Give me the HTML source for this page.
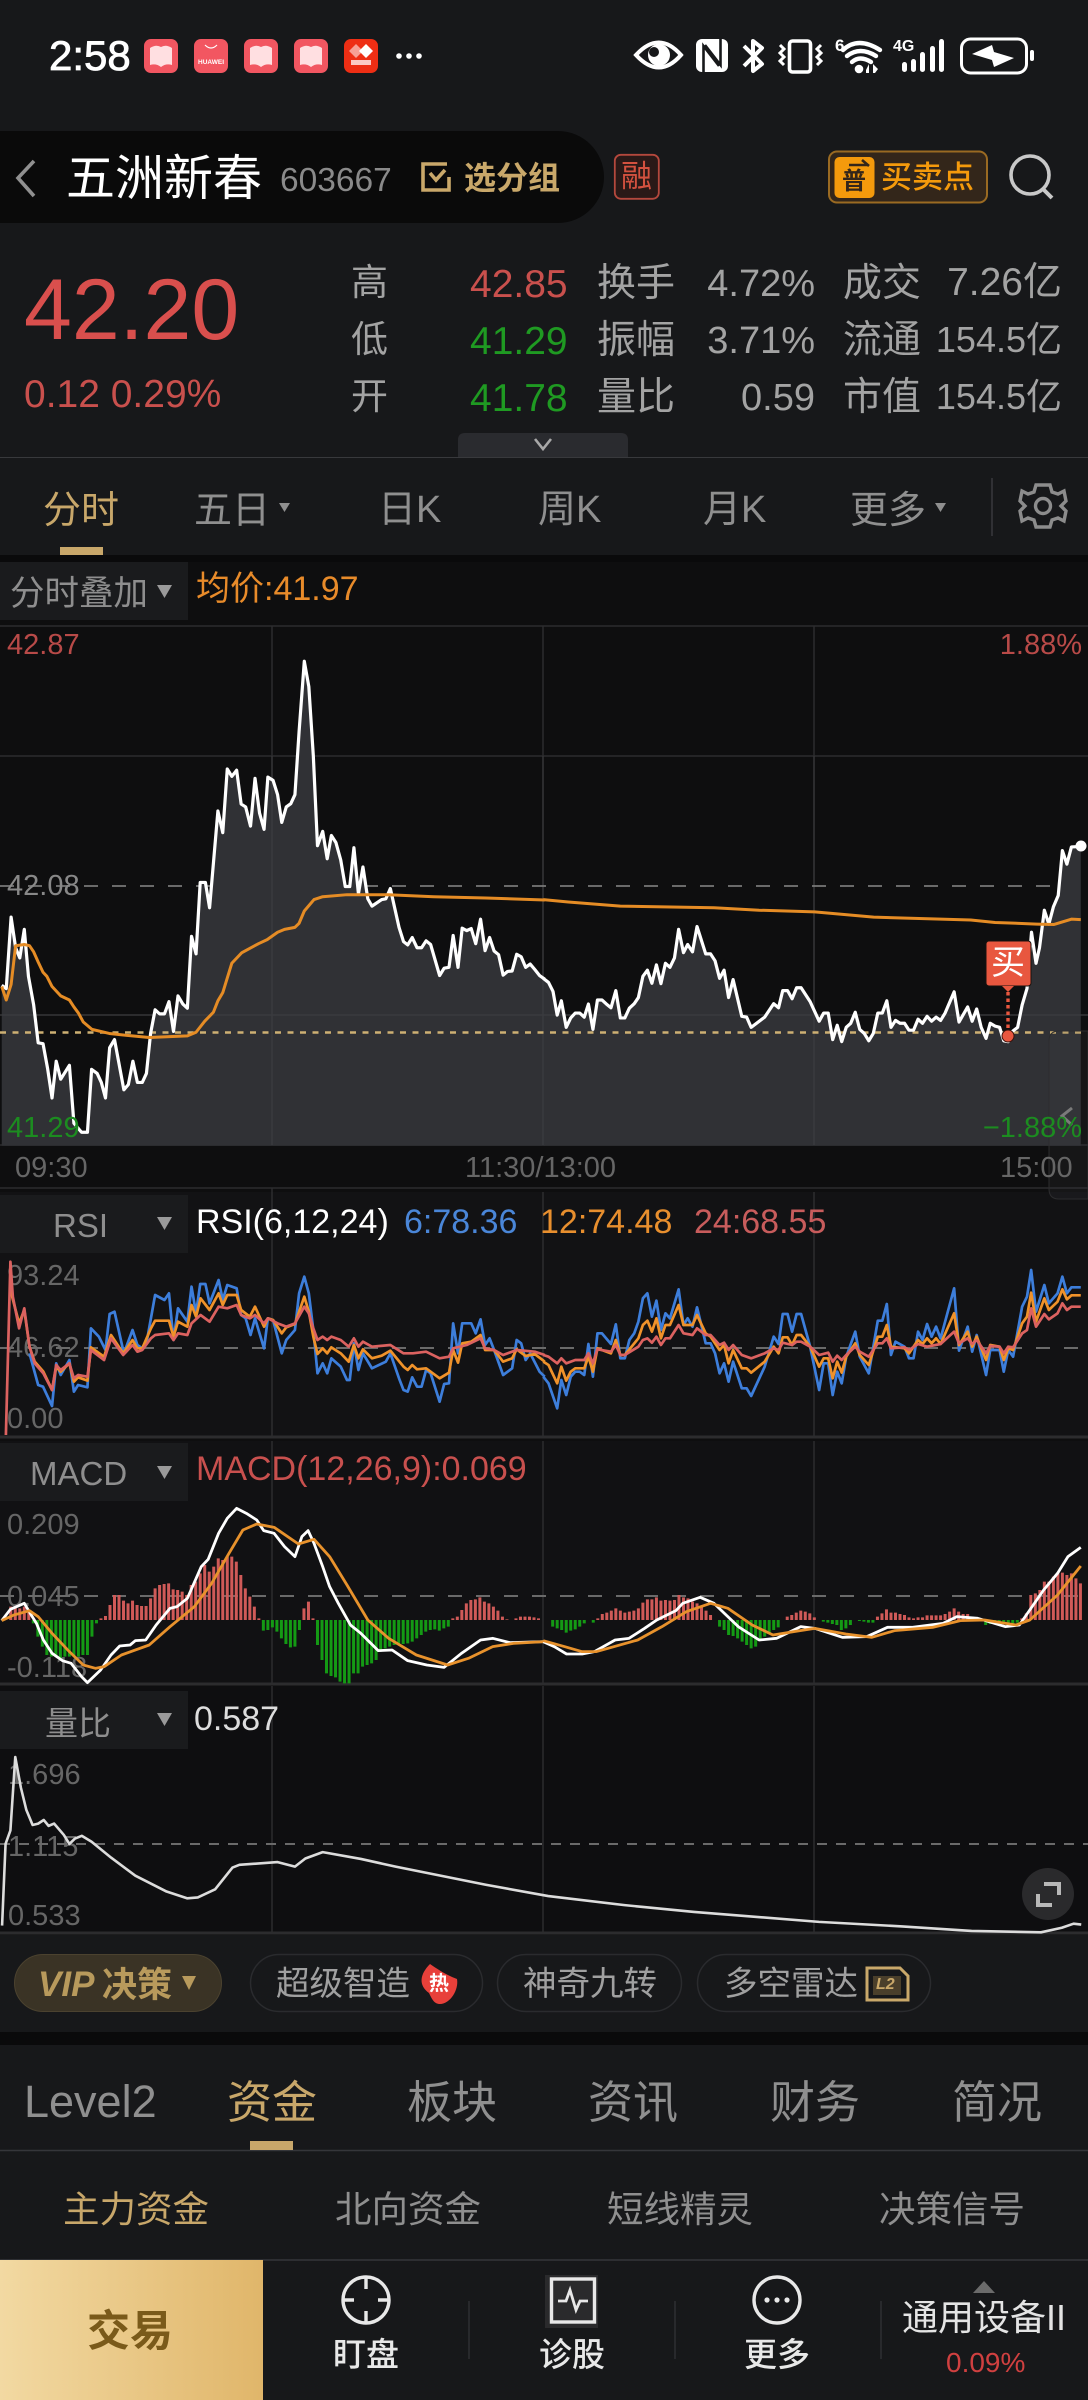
<!DOCTYPE html>
<html lang="zh"><head><meta charset="utf-8"><title>五洲新春</title>
<style>
html,body{margin:0;padding:0;background:#17181a}
#p{position:relative;width:1088px;height:2400px;overflow:hidden;background:#17181a;font-family:"Liberation Sans","Noto Sans CJK SC",sans-serif;color:#9a9a9a}
#p div,#p span.t{position:absolute}
.t{line-height:1;white-space:nowrap}
svg{position:absolute;left:0;top:0}
.l{vector-effect:non-scaling-stroke;fill:none;stroke-linejoin:round}
.box{background:#1a1b1d;left:0;width:188px}
.r{color:#c9504d}.g{color:#1f9a22}.w{color:#a3a3a3}.y{color:#666}
</style></head><body><div id="p">
<!-- backgrounds -->
<div style="left:-50px;top:131px;width:654px;height:92px;background:#0a0a0a;border-radius:46px"></div>
<div style="left:0;top:555px;width:1088px;height:1477px;background:#0e0e0f"></div>
<div style="left:0;top:1192px;width:1088px;height:245px;background:#121214"></div>
<div style="left:0;top:1441px;width:1088px;height:242px;background:#111113"></div>
<div style="left:0;top:1686px;width:1088px;height:247px;background:#0e0e10"></div>
<div style="left:0;top:1935px;width:1088px;height:97px;background:#17181a"></div>
<div style="left:0;top:2032px;width:1088px;height:13px;background:#0a0a0b"></div>
<div style="left:0;top:2045px;width:1088px;height:355px;background:#17181a"></div>
<div style="left:0;top:457px;width:1088px;height:1px;background:#38393c"></div>
<div style="left:0;top:555px;width:1088px;height:7px;background:#0a0a0b"></div>
<div class="box" style="top:562px;height:58px"></div>
<div class="box" style="top:1195px;height:58px"></div>
<div class="box" style="top:1443px;height:58px"></div>
<div class="box" style="top:1691px;height:58px"></div>
<!-- labels below lines -->
<span class="t y" style="left:7px;top:1262px;font-size:29px">93.24</span>
<span class="t y" style="left:7px;top:1334px;font-size:29px">46.62</span>
<span class="t y" style="left:7px;top:1405px;font-size:29px">0.00</span>
<span class="t y" style="left:7px;top:1511px;font-size:29px">0.209</span>
<span class="t y" style="left:7px;top:1583px;font-size:29px">0.045</span>
<span class="t y" style="left:7px;top:1654px;font-size:29px">-0.118</span>
<span class="t y" style="left:8px;top:1761px;font-size:29px">1.696</span>
<span class="t y" style="left:8px;top:1833px;font-size:29px">1.115</span>
<span class="t y" style="left:8px;top:1902px;font-size:29px">0.533</span>

<svg width="1088" height="2400" viewBox="0 0 1088 2400">
<!-- grid -->
<g stroke="#2c2c2e" stroke-width="1.5" fill="none">
<path d="M0 626H1088M0 756H1088M0 1015H1088M0 1145H1088M0 1188H1088"/>
<path d="M272 626V1145M543 626V1145M814 626V1145M272 1188V1437M543 1192V1437M814 1192V1437M272 1441V1683M543 1441V1683M814 1441V1683M272 1686V1933M543 1686V1933M814 1686V1933"/>
<path d="M0 1437H1088M0 1684H1088M0 1933H1088" stroke-width="3"/>
</g>
<g stroke="#6a6a6a" stroke-width="2" fill="none" stroke-dasharray="14 14">
<path d="M0 886H1088M0 1348H1088M0 1596H1088"/><path d="M0 1844H1088" stroke-dasharray="10 9"/>
</g>
<!-- price left half -->
<g transform="translate(0,560) scale(.34698,.40816)">
<polygon fill="#303135" points="5,1435 5,1042 18,1050 32,875 45,950 57,975 70,905 82,1020 97,1090 110,1183 124,1185 137,1245 150,1318 162,1228 175,1272 200,1238 213,1380 235,1402 252,1402 264,1248 280,1258 292,1280 304,1318 316,1195 330,1175 357,1298 370,1285 383,1228 396,1280 410,1280 422,1258 434,1160 447,1102 460,1112 474,1112 487,1082 500,1155 513,1068 527,1088 540,1098 552,922 565,965 577,790 592,790 604,852 628,615 642,668 655,512 668,530 682,515 695,598 708,605 722,652 735,535 748,620 761,660 772,532 787,540 800,575 812,643 825,605 838,597 850,575 862,420 877,248 890,310 903,480 915,700 930,665 943,732 955,675 968,692 982,735 995,800 1008,800 1020,705 1033,818 1046,752 1060,830 1072,848 1100,832 1112,830 1125,805 1150,900 1163,935 1175,943 1188,925 1202,950 1215,950 1228,933 1241,942 1267,1018 1280,1000 1294,998 1306,920 1320,998 1332,902 1345,908 1358,903 1371,940 1385,880 1398,957 1411,925 1424,958 1437,967 1450,1017 1463,1008 1476,1007 1489,966 1502,972 1515,998 1528,990 1541,1003 1555,1018 1570,1027 1570,1435"/>
</g>
<g transform="translate(544,560) scale(.34698,.40816)">
<polygon fill="#303135" points="-2,1435 -2,1025 13,1035 26,1057 38,1115 50,1080 64,1145 77,1122 90,1110 103,1110 116,1120 128,1088 141,1150 154,1078 167,1078 180,1088 193,1097 207,1055 220,1122 233,1122 246,1098 260,1087 272,1072 285,1020 298,1005 311,1037 324,992 337,1038 350,988 363,998 376,975 388,905 402,962 414,942 428,960 441,898 466,965 480,965 493,982 506,1025 519,1005 532,1072 545,1028 570,1118 584,1120 597,1145 636,1120 662,1087 676,1097 688,1055 702,1055 715,1075 728,1048 741,1048 767,1082 793,1130 806,1110 819,1110 832,1175 845,1140 858,1180 871,1145 884,1135 897,1108 910,1150 923,1160 936,1178 949,1160 962,1110 975,1110 988,1080 1000,1145 1013,1128 1026,1135 1039,1135 1052,1152 1065,1152 1078,1125 1091,1135 1104,1118 1117,1130 1130,1120 1143,1128 1156,1110 1182,1058 1196,1132 1221,1095 1234,1130 1247,1100 1260,1145 1274,1172 1286,1135 1300,1142 1313,1145 1325,1178 1338,1180 1350,1155 1365,1145 1378,1090 1392,1050 1405,912 1418,988 1428,950 1442,858 1455,892 1468,850 1482,822 1494,712 1507,745 1520,703 1547,702 1547,1435"/>
</g>
<path d="M272 756V1145M543 756V1145M814 756V1145M0 1015H1088" stroke="#fff" stroke-opacity=".05" stroke-width="1.5" fill="none"/>
<path d="M0 1032.5H1088" stroke="#cdb073" stroke-width="2.6" stroke-dasharray="6 6.5" fill="none"/>
<g transform="translate(0,560) scale(.34698,.40816)">
<polyline class="l" stroke="#fff" stroke-width="3.2" points="5,1042 18,1050 32,875 45,950 57,975 70,905 82,1020 97,1090 110,1183 124,1185 137,1245 150,1318 162,1228 175,1272 200,1238 213,1380 235,1402 252,1402 264,1248 280,1258 292,1280 304,1318 316,1195 330,1175 357,1298 370,1285 383,1228 396,1280 410,1280 422,1258 434,1160 447,1102 460,1112 474,1112 487,1082 500,1155 513,1068 527,1088 540,1098 552,922 565,965 577,790 592,790 604,852 628,615 642,668 655,512 668,530 682,515 695,598 708,605 722,652 735,535 748,620 761,660 772,532 787,540 800,575 812,643 825,605 838,597 850,575 862,420 877,248 890,310 903,480 915,700 930,665 943,732 955,675 968,692 982,735 995,800 1008,800 1020,705 1033,818 1046,752 1060,830 1072,848 1100,832 1112,830 1125,805 1150,900 1163,935 1175,943 1188,925 1202,950 1215,950 1228,933 1241,942 1267,1018 1280,1000 1294,998 1306,920 1320,998 1332,902 1345,908 1358,903 1371,940 1385,880 1398,957 1411,925 1424,958 1437,967 1450,1017 1463,1008 1476,1007 1489,966 1502,972 1515,998 1528,990 1541,1003 1555,1018 1570,1027"/>
<polyline class="l" stroke="#e58c25" stroke-width="3" points="5,1045 18,1078 32,1040 45,945 70,942 85,945 97,960 110,985 124,1010 135,1020 150,1045 175,1068 200,1078 213,1095 226,1110 240,1132 265,1150 315,1160 370,1165 430,1170 540,1166 565,1157 590,1130 615,1108 628,1080 642,1060 668,988 697,962 745,940 770,930 800,912 820,905 850,900 862,890 877,860 905,832 930,825 1000,820 1120,820 1250,825 1400,828 1570,833"/>
</g>
<g transform="translate(544,560) scale(.34698,.40816)">
<polyline class="l" stroke="#fff" stroke-width="3.2" points="-2,1025 13,1035 26,1057 38,1115 50,1080 64,1145 77,1122 90,1110 103,1110 116,1120 128,1088 141,1150 154,1078 167,1078 180,1088 193,1097 207,1055 220,1122 233,1122 246,1098 260,1087 272,1072 285,1020 298,1005 311,1037 324,992 337,1038 350,988 363,998 376,975 388,905 402,962 414,942 428,960 441,898 466,965 480,965 493,982 506,1025 519,1005 532,1072 545,1028 570,1118 584,1120 597,1145 636,1120 662,1087 676,1097 688,1055 702,1055 715,1075 728,1048 741,1048 767,1082 793,1130 806,1110 819,1110 832,1175 845,1140 858,1180 871,1145 884,1135 897,1108 910,1150 923,1160 936,1178 949,1160 962,1110 975,1110 988,1080 1000,1145 1013,1128 1026,1135 1039,1135 1052,1152 1065,1152 1078,1125 1091,1135 1104,1118 1117,1130 1130,1120 1143,1128 1156,1110 1182,1058 1196,1132 1221,1095 1234,1130 1247,1100 1260,1145 1274,1172 1286,1135 1300,1142 1313,1145 1325,1178 1338,1180 1350,1155 1365,1145 1378,1090 1392,1050 1405,912 1418,988 1428,950 1442,858 1455,892 1468,850 1482,822 1494,712 1507,745 1520,703 1547,702"/>
<polyline class="l" stroke="#e58c25" stroke-width="3" points="-2,832 70,838 220,848 490,852 620,858 780,862 950,875 1230,882 1300,888 1420,892 1470,893 1520,880 1547,881"/>
</g>
<circle cx="1081" cy="846" r="5.5" fill="#fff"/>
<!-- buy marker -->
<path d="M1008 992V1032" stroke="#e8573f" stroke-width="3.4" stroke-dasharray="3.5 3" fill="none"/>
<circle cx="1008" cy="1036" r="6" fill="#e8573f" stroke="#3a120c" stroke-width="1"/>
<rect x="986" y="941" width="45" height="45" rx="3" fill="#e8573f" stroke="#17120f"/>
<path d="M1002 986H1014L1008 992Z" fill="#e8573f"/>
<!-- handle -->
<path d="M1088 1031H1059Q1049 1031 1049 1041V1189Q1049 1199 1059 1199H1088Z" fill="#4a4a4e" fill-opacity=".14" stroke="#2c2c2e" stroke-width="1"/>
<path d="M1072 1108L1062 1116L1072 1125" stroke="#7a7a7a" stroke-width="3" fill="none"/>
<!-- RSI -->
<g transform="translate(0,1190) scale(.34698,.33333)">
<polyline class="l" stroke="#3d7edb" stroke-width="2.7" points="85,490 110,585 124,590 150,648 162,520 175,555 200,510 213,605 225,585 252,592 262,415 285,440 304,480 316,372 330,365 357,490 382,420 396,465 410,475 422,460 447,315 474,330 487,310 500,450 513,355 540,395 552,290 565,370 577,282 592,282 604,340 630,270 642,330 655,285 682,295 695,375 708,385 722,435 735,385 761,475 772,385 787,390 812,490 825,450 850,420 862,310 877,260 890,310 903,420 915,550 930,520 943,550 955,505 982,530 1000,570 1008,570 1020,460 1033,540 1046,490 1072,535 1112,515 1125,490 1150,565 1163,600 1175,605 1188,562 1202,590 1215,590 1228,540 1241,550 1267,635 1280,582 1294,580 1306,400 1320,490 1332,400 1358,400 1371,430 1385,388 1398,465 1411,445 1424,480 1450,555 1476,535 1489,450 1502,460 1515,510 1528,490 1555,545 1570,560"/>
<polyline class="l" stroke="#f0922a" stroke-width="2.7" points="30,300 55,400 70,360 85,470 100,515 125,545 150,600 162,530 175,545 200,520 213,575 225,562 252,572 262,472 300,500 320,435 355,490 382,450 396,475 410,475 435,415 447,392 487,392 500,440 513,395 540,410 552,345 565,380 578,325 604,360 630,310 642,345 655,315 682,315 695,360 720,380 735,350 761,410 772,385 787,390 812,430 825,412 850,402 877,320 890,365 903,440 915,492 930,475 943,490 955,472 982,490 1005,515 1020,465 1033,505 1046,478 1072,505 1100,497 1125,482 1163,530 1175,540 1188,525 1202,538 1228,535 1267,565 1294,548 1306,480 1320,518 1332,460 1358,455 1385,435 1398,480 1424,480 1450,515 1476,505 1489,478 1515,498 1541,492 1570,515"/>
<polyline class="l" stroke="#dc6260" stroke-width="2.7" points="17,735 30,215 37,320 55,415 70,355 85,470 100,520 125,550 150,600 162,525 175,540 200,520 213,565 225,555 252,560 262,480 300,510 320,445 355,495 382,465 396,485 410,480 435,445 447,435 487,430 500,450 513,430 540,435 552,400 578,375 604,395 630,350 655,355 682,345 695,375 720,385 735,375 761,400 772,385 800,400 825,410 850,400 877,350 890,370 903,415 915,450 930,440 943,450 955,440 982,450 1005,470 1020,445 1033,470 1046,455 1072,470 1125,465 1163,490 1190,490 1228,485 1267,505 1294,500 1306,475 1345,465 1385,445 1398,475 1424,480 1450,495 1489,480 1541,485 1570,495"/>
</g>
<g transform="translate(544,1190) scale(.34698,.33333)">
<polyline class="l" stroke="#3d7edb" stroke-width="2.7" points="-2,560 13,580 38,655 50,570 64,615 77,560 90,545 103,545 116,555 128,462 141,560 154,430 167,430 193,462 207,403 220,505 233,505 246,450 260,430 272,395 285,325 298,310 311,380 324,332 337,420 350,370 363,385 388,298 402,405 414,385 428,410 441,352 466,460 480,460 493,490 506,550 519,520 532,575 545,515 570,595 584,595 597,618 636,530 662,440 676,462 688,372 702,372 715,425 728,372 741,372 767,470 793,600 806,520 819,520 832,615 845,545 858,580 871,500 897,425 910,500 936,550 962,392 975,392 988,342 1000,495 1013,455 1039,470 1052,505 1065,505 1078,425 1091,450 1104,402 1117,440 1130,410 1143,445 1182,295 1196,482 1221,410 1234,485 1247,435 1274,555 1286,480 1313,480 1325,545 1338,480 1352,500 1378,350 1392,320 1404,240 1418,365 1442,285 1455,340 1480,310 1494,260 1507,310 1520,292 1547,292"/>
<polyline class="l" stroke="#f0922a" stroke-width="2.7" points="-2,515 13,525 38,580 50,530 64,572 77,545 90,535 116,535 128,500 141,545 154,475 193,490 207,450 220,495 233,495 272,445 285,405 298,392 311,425 324,385 337,445 350,405 363,405 388,345 402,405 428,405 441,375 466,430 480,440 506,480 519,465 532,520 545,480 570,535 584,535 597,548 636,515 662,470 676,490 688,442 702,442 715,465 728,435 741,435 767,470 793,530 806,505 819,505 832,565 845,515 858,548 871,500 897,460 910,495 936,525 962,440 975,440 988,405 1000,470 1039,475 1052,490 1078,450 1091,462 1104,445 1117,460 1130,445 1143,462 1182,370 1196,465 1221,425 1234,470 1247,440 1274,510 1286,465 1313,470 1325,510 1338,475 1352,480 1378,400 1392,380 1404,308 1418,395 1442,325 1455,360 1480,335 1494,298 1507,328 1520,316 1547,316"/>
<polyline class="l" stroke="#dc6260" stroke-width="2.7" points="-2,495 13,500 38,520 50,505 64,520 90,510 116,510 128,490 141,520 154,478 193,485 207,465 220,495 233,495 272,470 285,450 298,445 311,458 324,440 337,465 350,445 363,445 388,405 402,430 428,435 441,415 466,435 480,435 506,465 519,458 532,480 545,465 570,495 597,505 636,490 662,475 676,480 688,458 715,465 728,455 741,455 767,470 793,495 819,488 832,515 845,497 858,510 871,495 897,470 910,485 936,500 962,460 975,460 988,445 1000,475 1039,472 1052,480 1078,462 1104,470 1143,462 1182,425 1196,460 1221,445 1234,462 1247,450 1274,490 1286,468 1313,470 1325,490 1338,470 1352,472 1378,430 1392,420 1404,355 1418,410 1442,372 1455,388 1480,370 1494,340 1507,360 1520,350 1547,350"/>
</g>
<!-- MACD -->
<g transform="translate(0,1190) scale(.34698,.33333)">
<path class="l" stroke="#d05a58" stroke-width="3" d="M31 1250V1290M44 1250V1290M57 1255V1290M70 1250V1290M83 1265V1290M291 1285V1290M304 1278V1290M317 1245V1290M330 1215V1290M343 1215V1290M356 1232V1290M369 1240V1290M382 1232V1290M395 1245V1290M408 1248V1290M421 1248V1290M434 1225V1290M447 1195V1290M460 1185V1290M473 1182V1290M486 1180V1290M499 1198V1290M512 1200V1290M525 1205V1290M538 1215V1290M551 1185V1290M564 1175V1290M577 1150V1290M590 1125V1290M603 1145V1290M616 1130V1290M629 1105V1290M642 1110V1290M655 1100V1290M668 1100V1290M681 1115V1290M694 1155V1290M707 1195V1290M720 1220V1290M733 1250V1290M746 1285V1290M876 1255V1290M889 1235V1290M902 1285V1290M1305 1285V1290M1318 1280V1290M1331 1260V1290M1344 1240V1290M1357 1230V1290M1370 1228V1290M1383 1222V1290M1396 1235V1290M1409 1240V1290M1422 1250V1290M1435 1262V1290M1448 1280V1290M1461 1288V1290M1487 1285V1290M1500 1280V1290M1513 1280V1290M1526 1280V1290M1539 1282V1290M1552 1285V1290"/>
<path class="l" stroke="#149a14" stroke-width="3" d="M96 1290V1300M109 1290V1340M122 1290V1370M135 1290V1395M148 1290V1400M161 1290V1400M174 1290V1405M187 1290V1400M200 1290V1400M213 1290V1400M226 1290V1400M239 1290V1395M252 1290V1395M265 1290V1340M278 1290V1300M759 1290V1322M772 1290V1320M785 1290V1312M798 1290V1325M811 1290V1345M824 1290V1362M837 1290V1372M850 1290V1370M863 1290V1320M915 1290V1365M928 1290V1410M941 1290V1450M954 1290V1458M967 1290V1462M980 1290V1475M993 1290V1480M1006 1290V1480M1019 1290V1450M1032 1290V1450M1045 1290V1430M1058 1290V1425M1071 1290V1420M1084 1290V1410M1097 1290V1385M1110 1290V1375M1123 1290V1370M1136 1290V1365M1149 1290V1360M1162 1290V1362M1175 1290V1360M1188 1290V1355M1201 1290V1345M1214 1290V1335M1227 1290V1325M1240 1290V1320M1253 1290V1318M1266 1290V1322M1279 1290V1315M1292 1290V1310"/>
<polyline class="l" stroke="#fff" stroke-width="2.8" points="5,1292 30,1258 70,1240 90,1275 105,1300 125,1350 150,1390 180,1412 205,1420 235,1460 252,1478 290,1440 320,1395 345,1368 375,1365 390,1352 420,1350 450,1305 490,1255 510,1250 540,1225 580,1130 600,1108 630,1030 655,985 682,955 710,970 740,990 760,1022 790,1030 820,1070 850,1100 870,1040 888,1022 905,1060 930,1130 950,1190 975,1240 1010,1305 1040,1330 1090,1382 1130,1380 1175,1412 1230,1425 1280,1432 1330,1390 1385,1350 1420,1345 1470,1358 1570,1355"/>
<polyline class="l" stroke="#e8922c" stroke-width="2.8" points="5,1292 40,1275 85,1262 110,1280 150,1330 200,1385 240,1425 275,1435 300,1430 350,1395 430,1365 490,1310 560,1250 610,1180 660,1090 700,1020 740,1002 790,1012 860,1062 905,1048 950,1100 1000,1185 1060,1290 1120,1345 1200,1395 1290,1425 1350,1405 1420,1370 1480,1360 1570,1355"/>
</g>
<g transform="translate(544,1190) scale(.34698,.33333)">
<path class="l" stroke="#d05a58" stroke-width="3" d="M155 1285V1290M168 1272V1290M181 1268V1290M194 1262V1290M207 1255V1290M220 1262V1290M233 1268V1290M246 1265V1290M259 1262V1290M272 1255V1290M285 1238V1290M298 1228V1290M311 1228V1290M324 1222V1290M337 1232V1290M350 1230V1290M363 1232V1290M376 1230V1290M389 1215V1290M402 1222V1290M415 1225V1290M428 1235V1290M441 1240V1290M454 1248V1290M467 1262V1290M480 1275V1290M701 1280V1290M714 1275V1290M727 1268V1290M740 1262V1290M753 1265V1290M766 1270V1290M779 1282V1290M961 1280V1290M974 1270V1290M987 1258V1290M1000 1268V1290M1013 1268V1290M1026 1272V1290M1039 1275V1290M1052 1282V1290M1065 1285V1290M1078 1282V1290M1091 1282V1290M1104 1276V1290M1117 1276V1290M1130 1276V1290M1143 1276V1290M1156 1272V1290M1169 1265V1290M1182 1255V1290M1195 1265V1290M1208 1272V1290M1221 1272V1290M1234 1285V1290M1377 1285V1290M1390 1270V1290M1403 1215V1290M1416 1210V1290M1429 1200V1290M1442 1175V1290M1455 1175V1290M1468 1160V1290M1481 1150V1290M1494 1148V1290M1507 1155V1290M1520 1150V1290M1533 1165V1290M1546 1180V1290"/>
<path class="l" stroke="#149a14" stroke-width="3" d="M25 1290V1310M38 1290V1315M51 1290V1320M64 1290V1328M77 1290V1322M90 1290V1318M103 1290V1310M116 1290V1300M142 1290V1298M506 1290V1310M519 1290V1320M532 1290V1335M545 1290V1338M558 1290V1345M571 1290V1355M584 1290V1365M597 1290V1375M610 1290V1370M623 1290V1350M636 1290V1340M649 1290V1330M662 1290V1320M675 1290V1312M805 1290V1295M818 1290V1298M831 1290V1302M844 1290V1305M857 1290V1320M870 1290V1315M883 1290V1305M909 1290V1293M922 1290V1295M935 1290V1298M948 1290V1298M1273 1290V1305M1286 1290V1302M1299 1290V1302M1312 1290V1302M1325 1290V1302M1338 1290V1300M1351 1290V1300M1364 1290V1298"/>
<polyline class="l" stroke="#fff" stroke-width="2.8" points="-2,1355 30,1370 65,1392 110,1392 145,1385 205,1350 245,1345 290,1315 325,1290 380,1262 400,1240 450,1222 490,1240 520,1270 560,1310 620,1350 670,1345 740,1310 780,1315 860,1342 930,1340 990,1312 1060,1312 1150,1300 1190,1280 1250,1285 1330,1310 1370,1305 1400,1260 1440,1200 1480,1150 1510,1100 1547,1072"/>
<polyline class="l" stroke="#e8922c" stroke-width="2.8" points="-2,1352 60,1370 110,1385 150,1385 270,1350 340,1310 410,1265 480,1240 530,1255 600,1305 660,1335 720,1325 780,1315 870,1332 945,1342 1010,1322 1120,1312 1200,1292 1270,1290 1360,1305 1400,1290 1480,1215 1547,1128"/>
</g>
<!-- volume ratio -->
<g transform="translate(0,1690) scale(.69399,.4529)">
<polyline class="l" stroke="#dcdcdc" stroke-width="2.6" points="3,520 8,340 15,310 22,148 30,215 38,265 47,298 55,295 63,287 70,300 78,295 92,320 100,340 108,328 118,322 132,335 160,370 195,410 240,445 270,460 285,458 310,440 335,392 345,386 400,380 425,390 440,372 465,358 520,373 570,390 700,430 790,455 900,475 1000,490 1180,512 1300,522 1400,532 1500,535 1530,525 1547,516 1558,518"/>
</g>
<circle cx="1048" cy="1894" r="26" fill="#2a2a2c"/>
<path d="M1044 1884H1059V1895M1052 1905H1038V1894" stroke="#b8b8b8" stroke-width="4" fill="none"/>
<!-- status icons -->
<g fill="#f25661">
<rect x="144" y="39" width="34" height="34" rx="7"/><rect x="194" y="39" width="34" height="34" rx="7"/><rect x="244" y="39" width="34" height="34" rx="7"/><rect x="294" y="39" width="34" height="34" rx="7"/>
</g>
<rect x="344" y="39" width="34" height="34" rx="7" fill="#ee2e14"/>
<g fill="#ffdfe1">
<path d="M150 48Q156 44 161 47Q166 44 172 48V65Q166 63 161 67Q156 63 150 65Z"/>
<path d="M250 48Q256 44 261 47Q266 44 272 48V65Q266 63 261 67Q256 63 250 65Z"/>
<path d="M300 48Q306 44 311 47Q316 44 322 48V65Q316 63 311 67Q306 63 300 65Z"/>
</g>
<g fill="#fff">
<path d="M366 44L373 51L366 58L359 51Z"/>
<path d="M356 44L363 51L356 58L349 51Z" opacity=".55"/>
<rect x="351" y="60" width="20" height="5" opacity=".75"/>
</g>
<path d="M205 45Q211 51 217 45" stroke="#fff" stroke-width="1.2" fill="none"/>
<g fill="#fff"><circle cx="399" cy="56" r="2.8"/><circle cx="409" cy="56" r="2.8"/><circle cx="419" cy="56" r="2.8"/></g>
<!-- eye -->
<path d="M636 55Q659 30 681 55Q659 80 636 55Z" fill="none" stroke="#fff" stroke-width="4"/>
<circle cx="659" cy="55" r="11" fill="#fff"/><circle cx="654" cy="52" r="5" fill="#17181a"/>
<!-- NFC -->
<rect x="696" y="39" width="32" height="33" rx="6" fill="#fff"/>
<path d="M703.500 72V46L719 66M720.500 39V65L705 45" stroke="#17181a" stroke-width="2.6" fill="none"/>
<!-- BT -->
<path d="M744 46L762 64L753 71V41L762 48L744 66" stroke="#fff" stroke-width="4" fill="none" stroke-linejoin="round"/>
<!-- vibrate -->
<rect x="789.500" y="41" width="21" height="31" rx="3" fill="none" stroke="#fff" stroke-width="3.6"/>
<path d="M780 45L784 49L780 53L784 57L780 61L784 65M821 45L817 49L821 53L817 57L821 61L817 65" stroke="#fff" stroke-width="3" fill="none"/>
<!-- wifi -->
<path d="M844 50Q859 36 881 50M848 56Q861 46 877 56M853 62Q861 55 872 62" stroke="#fff" stroke-width="4.4" fill="none" stroke-linecap="round" transform="translate(-1,0)"/>
<circle cx="859" cy="69" r="4.3" fill="#fff"/>
<path d="M866 73H869V64L866 70ZM873 64V73H875L878 69Z" fill="#fff"/>
<!-- signal -->
<g fill="#fff"><rect x="902" y="62" width="5" height="10" rx="2.5"/><rect x="911" y="59" width="5" height="13" rx="2.5"/><rect x="920" y="52" width="5" height="20" rx="2.5"/><rect x="930" y="46" width="5" height="26" rx="2.5"/><rect x="939" y="39" width="5" height="33" rx="2.5"/></g>
<!-- battery -->
<rect x="961.500" y="39" width="65" height="34" rx="9" fill="none" stroke="#fff" stroke-width="3"/>
<rect x="1030" y="50" width="4" height="11" rx="2" fill="#fff"/>
<path d="M972 54L992 45L994 52L1014 58L994 67L992 60Z" fill="#fff"/>
<!-- header icons -->
<path d="M34 161L18 178L34 196" stroke="#909090" stroke-width="3.6" fill="none"/>
<path d="M447 164H423V190H449V177" stroke="#c9a86a" stroke-width="3.6" fill="none"/>
<path d="M430 173L436 180L445 170" stroke="#c9a86a" stroke-width="3.6" fill="none"/>
<rect x="614.800" y="154.800" width="44" height="44" rx="6" fill="#2a1917" stroke="#b4483d" stroke-width="1.8"/>
<rect x="829" y="151.500" width="158" height="51" rx="8" fill="#33261a" stroke="#9a6a22" stroke-width="2"/>
<rect x="834.500" y="157" width="40" height="41" rx="5" fill="#f49a0c"/>
<path d="M849 165H868M862 160L869 166" stroke="#33261a" stroke-width="2.6" fill="none"/>
<circle cx="1030" cy="175" r="19" fill="none" stroke="#c8c8c8" stroke-width="3.6"/><path d="M1043 189L1052 198" stroke="#c8c8c8" stroke-width="4"/>
<!-- expand tab + tabs -->
<path d="M458 457V440Q458 433 465 433H621Q628 433 628 440V457Z" fill="#2a2b2f"/>
<path d="M535 439L543 449L551 439" stroke="#a8a8a8" stroke-width="2.6" fill="none"/>
<path d="M992 478V536" stroke="#38393c" stroke-width="1.5"/>
<g transform="translate(1043,506)" fill="none" stroke="#8c8c8c" stroke-width="3.4"><path d="M-7 -21H7L9 -14L15 -12L21 -15L23 -5L18 0L23 5L21 15L15 12L9 14L7 21H-7L-9 14L-15 12L-21 15L-23 5L-18 0L-23 -5L-21 -15L-15 -12L-9 -14Z"/><circle r="7.500"/></g>
<path d="M279 503H290L284.500 512Z" fill="#8f8f8f"/>
<path d="M935 503H946L940.500 512Z" fill="#8f8f8f"/>
<path d="M157 585H172L164.500 598Z" fill="#9a9a9a"/><path d="M157 1217H172L164.500 1230Z" fill="#9a9a9a"/><path d="M157 1466H172L164.500 1479Z" fill="#9a9a9a"/><path d="M157 1713H172L164.500 1726Z" fill="#9a9a9a"/>
<!-- pills -->
<rect x="14.500" y="1954.500" width="207" height="57" rx="28.500" fill="#3a3325" stroke="#4b422f"/>
<rect x="250.500" y="1954.500" width="232" height="57" rx="28.500" fill="none" stroke="#2a2b2e" stroke-width="1.500"/>
<rect x="497.500" y="1954.500" width="184" height="57" rx="28.500" fill="none" stroke="#2a2b2e" stroke-width="1.500"/>
<rect x="697.500" y="1954.500" width="233" height="57" rx="28.500" fill="none" stroke="#2a2b2e" stroke-width="1.500"/>
<path d="M182 1976H196L189 1990Z" fill="#b89a5c"/>
<path d="M429 1993C418 1985 420 1974 430 1964C436 1968 444 1974 457 1979C459 1990 450 2004 440 2004C434 2004 432 1999 429 1993Z" fill="#e8403a"/>
<path d="M867 1968H900L908 1976V2000H867Z" fill="none" stroke="#c9a86a" stroke-width="3"/>
<rect x="873" y="1976" width="28" height="19" fill="#4a3f2b"/>
<!-- bottom lines -->
<path d="M0 2150.500H1088M0 2260H1088" stroke="#35363a" stroke-width="1.500"/>
<path d="M469 2301V2359M675 2301V2359M881 2301V2359" stroke="#2e2f33" stroke-width="1.500"/>
<defs><linearGradient id="tg" x1="0" x2="1"><stop offset="0" stop-color="#f2d9a2"/><stop offset="1" stop-color="#e0b66a"/></linearGradient></defs>
<rect x="0" y="2260" width="263" height="140" fill="url(#tg)"/>
<g fill="none" stroke="#e8e8e8" stroke-width="3.400">
<circle cx="366" cy="2300" r="23"/><path d="M366 2277V2289M366 2311V2323M343 2300H354M378 2300H389"/>
<rect x="545" y="2275" width="53" height="53" fill="#2a2a2c" stroke="none"/>
<rect x="551.500" y="2279" width="43" height="43" stroke-width="3.400"/>
<path d="M558 2301H566L570 2290L576 2310L580 2301H588" stroke-width="2.800"/>
<circle cx="777" cy="2300" r="23"/></g>
<g fill="#e8e8e8"><circle cx="767" cy="2300" r="2.600"/><circle cx="777" cy="2300" r="2.600"/><circle cx="787" cy="2300" r="2.600"/></g>
<path d="M973 2293L984 2281L995 2293Z" fill="#6b6b6b"/>
</svg>

<!-- status text -->
<span class="t" style="left:49px;top:35px;font-size:42px;color:#fff;-webkit-text-stroke:.8px #fff">2:58</span>
<span class="t" style="left:196px;top:60px;width:30px;font-size:6.500px;color:#fff;text-align:center;font-weight:700">HUAWEI</span>
<span class="t" style="left:835px;top:37px;font-size:17px;font-weight:700;color:#fff">6</span>
<span class="t" style="left:893px;top:39px;font-size:16px;font-weight:700;color:#fff">4G</span>
<!-- header text -->
<span class="t" style="left:66px;top:155px;font-size:49px;color:#fff">五洲新春</span>
<span class="t" style="left:280px;top:164px;font-size:33.500px;color:#8a8a8a">603667</span>
<span class="t" style="left:464px;top:162px;font-size:32px;color:#c9a86a;font-weight:700">选分组</span>
<span class="t" style="left:621px;top:161px;font-size:31px;color:#d2513f">融</span>
<span class="t" style="left:881px;top:162px;font-size:31px;color:#f49a0c;font-weight:500">买卖点</span>
<span class="t" style="left:842px;top:170px;font-size:24px;color:#33261a;font-weight:700">普</span>
<!-- quote -->
<span class="t" style="left:24px;top:267px;font-size:86px;color:#d94f4d">42.20</span>
<span class="t r" style="left:24px;top:375px;font-size:39px">0.12 0.29%</span>
<span class="t w" style="left:351px;top:264px;font-size:37px">高</span>
<span class="t w" style="left:351px;top:321px;font-size:37px">低</span>
<span class="t w" style="left:351px;top:378px;font-size:37px">开</span>
<span class="t r" style="left:470px;top:265px;font-size:39px">42.85</span>
<span class="t g" style="left:470px;top:322px;font-size:39px">41.29</span>
<span class="t g" style="left:470px;top:379px;font-size:39px">41.78</span>
<span class="t w" style="left:597px;top:264px;font-size:39px">换手</span>
<span class="t w" style="left:597px;top:321px;font-size:39px">振幅</span>
<span class="t w" style="left:597px;top:378px;font-size:39px">量比</span>
<span class="t w" style="right:273px;top:265px;font-size:38px">4.72%</span>
<span class="t w" style="right:273px;top:322px;font-size:38px">3.71%</span>
<span class="t w" style="right:273px;top:379px;font-size:38px">0.59</span>
<span class="t w" style="left:843px;top:264px;font-size:39px">成交</span>
<span class="t w" style="left:843px;top:321px;font-size:39px">流通</span>
<span class="t w" style="left:843px;top:378px;font-size:39px">市值</span>
<span class="t w" style="right:26px;top:263px;font-size:39px">7.26亿</span>
<span class="t w" style="right:26px;top:322px;font-size:36px">154.5亿</span>
<span class="t w" style="right:26px;top:379px;font-size:36px">154.5亿</span>
<!-- tabs -->
<span class="t" style="left:43px;top:492px;font-size:38px;color:#c8a76a">分时</span>
<span class="t" style="left:194px;top:492px;font-size:38px;color:#8f8f8f">五日</span>
<span class="t" style="left:378px;top:491px;font-size:38px;color:#8f8f8f">日K</span>
<span class="t" style="left:538px;top:491px;font-size:38px;color:#8f8f8f">周K</span>
<span class="t" style="left:703px;top:491px;font-size:38px;color:#8f8f8f">月K</span>
<span class="t" style="left:850px;top:492px;font-size:38px;color:#8f8f8f">更多</span>
<div style="left:60px;top:547px;width:43px;height:8px;background:#c8a76a"></div>
<!-- chart text -->
<span class="t" style="left:10px;top:577px;font-size:34.500px;color:#8e8e8e">分时叠加</span>
<span class="t" style="left:196px;top:572px;font-size:34px;color:#e88b2a">均价:41.97</span>
<span class="t" style="left:7px;top:631px;font-size:29px;color:#b84a48">42.87</span>
<span class="t" style="left:7px;top:872px;font-size:29px;color:#888">42.08</span>
<span class="t" style="left:7px;top:1114px;font-size:29px;color:#1c8c20">41.29</span>
<span class="t" style="right:6px;top:631px;font-size:29px;color:#b84a48">1.88%</span>
<span class="t" style="right:6px;top:1114px;font-size:29px;color:#1c8c20">−1.88%</span>
<span class="t" style="left:15px;top:1154px;font-size:29px;color:#666">09:30</span>
<span class="t" style="left:465px;top:1154px;font-size:29px;color:#666">11:30/13:00</span>
<span class="t" style="left:1000px;top:1154px;font-size:29px;color:#666">15:00</span>
<span class="t" style="left:991px;top:946px;font-size:34px;color:#fff">买</span>
<span class="t" style="left:53px;top:1209px;font-size:33px;color:#8e8e8e">RSI</span>
<span class="t" style="left:196px;top:1205px;font-size:34px;color:#fff">RSI(6,12,24)</span>
<span class="t" style="left:404px;top:1205px;font-size:34px;color:#4a86d8">6:78.36</span>
<span class="t" style="left:540px;top:1205px;font-size:34px;color:#e88f2e">12:74.48</span>
<span class="t" style="left:694px;top:1205px;font-size:34px;color:#c85c5c">24:68.55</span>
<span class="t" style="left:30px;top:1457px;font-size:33px;color:#8e8e8e">MACD</span>
<span class="t" style="left:196px;top:1452px;font-size:34px;color:#c8504e">MACD(12,26,9):0.069</span>
<span class="t" style="left:45px;top:1707px;font-size:33px;color:#8e8e8e">量比</span>
<span class="t" style="left:194px;top:1702px;font-size:34px;color:#ddd">0.587</span>
<!-- pills text -->
<span class="t" style="left:38px;top:1967px;font-size:35px;font-weight:700;font-style:italic;color:#b89a5c">VIP</span>
<span class="t" style="left:102px;top:1968px;font-size:35px;font-weight:700;color:#b89a5c">决策</span>
<span class="t" style="left:276px;top:1968px;font-size:33.500px;color:#a0a0a0">超级智造</span>
<span class="t" style="left:429px;top:1974px;font-size:20px;font-weight:700;color:#fff">热</span>
<span class="t" style="left:523px;top:1968px;font-size:33.500px;color:#a0a0a0">神奇九转</span>
<span class="t" style="left:724px;top:1968px;font-size:33.500px;color:#a0a0a0">多空雷达</span>
<span class="t" style="left:876px;top:1977px;font-size:16px;font-weight:700;font-style:italic;color:#c9a86a">L2</span>
<!-- lower tabs -->
<span class="t" style="left:24px;top:2079px;font-size:45px;color:#8f8f8f">Level2</span>
<span class="t" style="left:227px;top:2080px;font-size:45px;color:#c8a76a">资金</span>
<span class="t" style="left:407px;top:2080px;font-size:45px;color:#8f8f8f">板块</span>
<span class="t" style="left:588px;top:2080px;font-size:45px;color:#8f8f8f">资讯</span>
<span class="t" style="left:770px;top:2080px;font-size:45px;color:#8f8f8f">财务</span>
<span class="t" style="left:952px;top:2080px;font-size:45px;color:#8f8f8f">简况</span>
<div style="left:250px;top:2141px;width:43px;height:9px;background:#c8a76a"></div>
<span class="t" style="left:63px;top:2192px;font-size:36.500px;color:#c8a76a">主力资金</span>
<span class="t" style="left:335px;top:2192px;font-size:36.500px;color:#8f8f8f">北向资金</span>
<span class="t" style="left:607px;top:2192px;font-size:36.500px;color:#8f8f8f">短线精灵</span>
<span class="t" style="left:879px;top:2192px;font-size:36.500px;color:#8f8f8f">决策信号</span>
<span class="t" style="left:87px;top:2311px;font-size:43px;font-weight:700;color:#7a5a1a">交易</span>
<span class="t" style="left:333px;top:2338px;font-size:33px;font-weight:500;color:#e8e8e8">盯盘</span>
<span class="t" style="left:539px;top:2338px;font-size:33px;font-weight:500;color:#e8e8e8">诊股</span>
<span class="t" style="left:744px;top:2338px;font-size:33px;font-weight:500;color:#e8e8e8">更多</span>
<span class="t" style="left:902px;top:2300px;font-size:36px;color:#e4e4e4">通用设备II</span>
<span class="t" style="left:946px;top:2349px;font-size:28px;color:#d04040">0.09%</span>
</div></body></html>
